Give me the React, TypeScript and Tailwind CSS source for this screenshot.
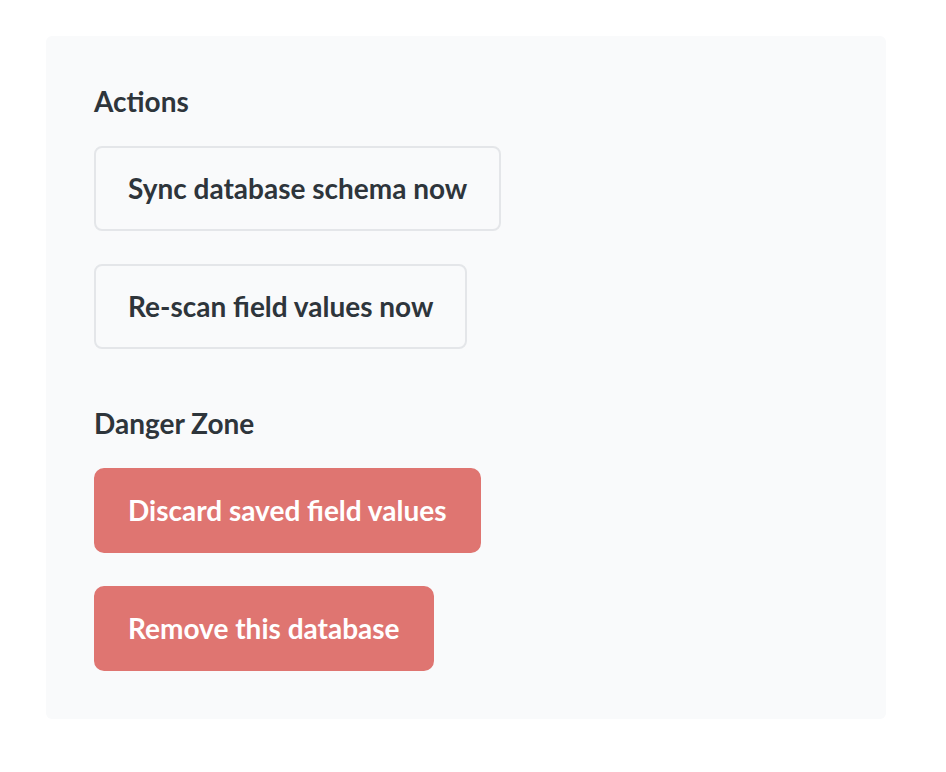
import React from 'react';

// Simple bordered action button
const ActionButton = ({ label }: { label: string }) => (
    <button className="self-start rounded-lg border-2 border-[#e4e6e9] bg-[#f9fafb] px-8 py-6 text-[28px] font-bold leading-[33px] text-[#2e353b]">
        {label}
    </button>
);

// Red destructive button
const DangerButton = ({ label }: { label: string }) => (
    <button className="self-start rounded-[10px] border-2 border-[#df7571] bg-[#df7571] px-8 py-6 text-[28px] font-bold leading-[33px] text-white">
        {label}
    </button>
);

export default function App() {
    return (
        <div className="min-h-screen bg-white pt-9 pl-[46px]" style={{ fontFamily: 'Lato, "Open Sans", sans-serif' }}>
            <div className="flex w-[840px] flex-col rounded-md bg-[#f9fafb] p-12">
                {/* Actions */}
                <h2 className="mb-7 text-[28px] font-bold leading-[34px] text-[#2e353b]">Actions</h2>
                <div className="flex flex-col gap-[33px]">
                    <ActionButton label="Sync database schema now" />
                    <ActionButton label="Re-scan field values now" />
                </div>

                {/* Danger Zone */}
                <h2 className="mt-[57px] mb-7 text-[28px] font-bold leading-[34px] text-[#2e353b]">Danger Zone</h2>
                <div className="flex flex-col gap-[33px]">
                    <DangerButton label="Discard saved field values" />
                    <DangerButton label="Remove this database" />
                </div>
            </div>
        </div>
    );
}
